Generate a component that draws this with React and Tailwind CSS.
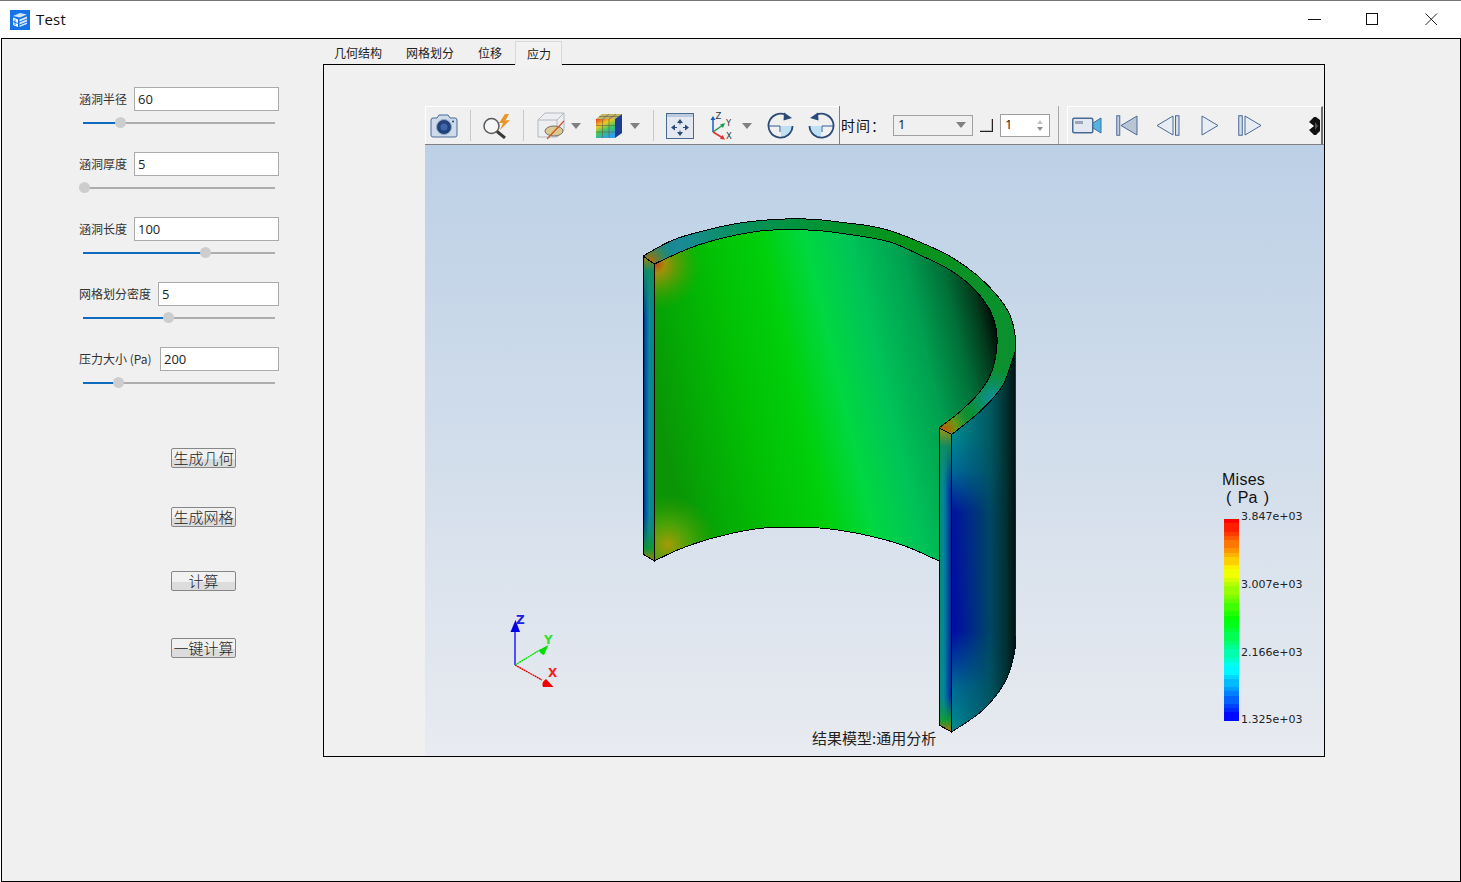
import React from 'react';

const cjk = "[font-family:'Noto_Sans_CJK_SC',sans-serif]";

const sliders = [
  { label: '涵洞半径', value: '60', inputClass: 'w-[145px]', handle: 37 },
  { label: '涵洞厚度', value: '5', inputClass: 'w-[145px]', handle: 1 },
  { label: '涵洞长度', value: '100', inputClass: 'w-[145px]', handle: 122 },
  { label: '网格划分密度', value: '5', inputClass: 'w-[121px]', handle: 85 },
  { label: '压力大小 (Pa)', value: '200', inputClass: 'w-[119px]', handle: 35 },
];

const actions = [
  { label: '生成几何', margin: 'mt-[60px]' },
  { label: '生成网格', margin: 'mt-[39px]' },
  { label: '计算', margin: 'mt-[44px]' },
  { label: '一键计算', margin: 'mt-[47px]' },
];

// smooth curve through points, pen must already be at the first point
const curve = (pts) => {
  let d = '';
  for (let i = 0; i < pts.length - 1; i++) {
    const p0 = pts[i - 1] || pts[i];
    const p1 = pts[i];
    const p2 = pts[i + 1];
    const p3 = pts[i + 2] || p2;
    const c1 = [p1[0] + (p2[0] - p0[0]) / 6, p1[1] + (p2[1] - p0[1]) / 6];
    const c2 = [p2[0] - (p3[0] - p1[0]) / 6, p2[1] - (p3[1] - p1[1]) / 6];
    d += ` C${c1[0]} ${c1[1]} ${c2[0]} ${c2[1]} ${p2[0]} ${p2[1]}`;
  }
  return d;
};

const outerArc = [[643, 256], [673, 240], [706.7, 230], [740, 223], [778, 219.3], [813, 219.3], [846.7, 223], [870, 226], [893, 231.7], [926.7, 245], [953, 258], [976.7, 275], [996.7, 295], [1010, 315], [1015, 335], [1015.7, 350]];
const outerLower = [[1015.7, 350], [1013, 358], [1003, 385], [986.7, 405], [970, 420], [951.6, 434.5]];
const innerArc = [[654.3, 264], [690, 248], [723, 238], [760, 231], [790, 229.7], [820, 230.7], [853, 235], [870, 237.7], [893, 243], [920, 255], [946.7, 268], [970, 285], [988, 306.7], [996, 328], [996.7, 348], [991.7, 371.7], [980, 391.7], [960, 411.7], [939, 428]];
const bottomArc = [[939, 561], [905, 546], [870, 536], [830, 529], [793, 527], [755, 529], [713, 538], [680, 549], [654.3, 561]];
const outerBottom = [[951.6, 732], [983, 710], [1005, 682], [1014, 655], [1015.7, 636]];

const interiorPath = `M654.3 264${curve(innerArc)} L939 561${curve(bottomArc)} Z`;
const rimPath = `M643 256${curve(outerArc)}${curve(outerLower)} L939 428${curve([...innerArc].reverse())} Z`;
const outsidePath = `M951.6 434.5 L951.6 732${curve(outerBottom)} L1015.7 350${curve(outerLower)} Z`;

const legendBands = Array.from({ length: 48 }, (_, i) => {
  const hue = (240 * i) / 47;
  return { key: i, color: `hsl(${Math.round(hue / 7) * 7} 100% 50%)` };
});

const Caret = ({ className = '' }) => (
  <svg width="10" height="6" viewBox="0 0 10 6" className={`shrink-0 ${className}`}>
    <path d="M0 0H10L5 6Z" fill="#808080" />
  </svg>
);

const Separator = ({ className = '' }) => <div className={`w-px h-[31px] bg-[#c9c9c9] shrink-0 ${className}`} />;

const CameraIcon = ({ className }) => (
  <svg width="28" height="24" viewBox="0 0 28 24" className={`shrink-0 ${className}`}>
    <path d="M3 4H7L9 1H18L20 4H25Q27 4 27 6V21Q27 23 25 23H3Q1 23 1 21V6Q1 4 3 4Z" fill="#cfdbea" stroke="#4a6a96" />
    <circle cx="14" cy="13" r="7.5" fill="#23427a" stroke="#8ea8cc" />
    <circle cx="14" cy="13" r="3.5" fill="#3f66a8" />
    <circle cx="23" cy="7.5" r="1" fill="#23427a" />
  </svg>
);

const SearchIcon = ({ className }) => (
  <svg width="30" height="26" viewBox="0 0 30 26" className={`shrink-0 ${className}`}>
    <circle cx="9.5" cy="13" r="7.5" fill="#f4f6f8" stroke="#5a5a5a" strokeWidth="1.5" />
    <path d="M15 18.5L23 25" stroke="#3a3a3a" strokeWidth="3" />
    <path d="M23 1L17 10L21 10L18 17L28 7L23.5 7.5L27 1Z" fill="#e8962a" />
  </svg>
);

const CubeIcon = ({ className }) => (
  <svg width="28" height="28" viewBox="0 0 28 28" className={`shrink-0 ${className}`}>
    <path d="M1 8L8 1H27V18L20 25H1Z" fill="#eceef2" stroke="#b4b8bf" />
    <path d="M1 8H20V25M20 8L27 1" fill="none" stroke="#b4b8bf" />
    <ellipse cx="17" cy="19" rx="9" ry="5" fill="#dbc98d" stroke="#707070" />
    <path d="M10 27L27 9" stroke="#d0502a" strokeWidth="1.2" />
  </svg>
);

const ColorCubeIcon = ({ className }) => (
  <svg width="28" height="26" viewBox="0 0 28 26" className={`shrink-0 ${className}`}>
    <defs>
      <linearGradient id="cubeFace" x1="0" y1="0" x2="0.5" y2="1">
        <stop offset="0" stopColor="#e83a28" />
        <stop offset="0.35" stopColor="#f0c820" />
        <stop offset="0.65" stopColor="#40c860" />
        <stop offset="1" stopColor="#30a0e8" />
      </linearGradient>
    </defs>
    <path d="M1 6L7 1H27L20 6Z" fill="#c4b468" />
    <path d="M20 6L27 1V20L20 25Z" fill="#1d3d94" />
    <rect x="1" y="6" width="19" height="19" fill="url(#cubeFace)" />
    <path d="M7.5 6V25M14 6V25M1 12.5H20M1 19H20M14 1L8 6M21 1L14 6M4 3.5H24" stroke="#5f5f4a" strokeWidth="0.6" />
  </svg>
);

const FitIcon = ({ className }) => (
  <svg width="28" height="26" viewBox="0 0 28 26" className={`shrink-0 ${className}`}>
    <rect x="0.5" y="0.5" width="27" height="25" fill="#e4e9f1" stroke="#4a6a96" />
    <rect x="1" y="1" width="26" height="3" fill="#bccbde" />
    <path d="M14 8V21M7.5 14.5H20.5" stroke="#2c4a74" />
    <path d="M14 6L11 10H17ZM14 23L11 19H17ZM5 14.5L9 11.5V17.5ZM23 14.5L19 11.5V17.5Z" fill="#2c4a74" />
    <rect x="11" y="11.5" width="6" height="6" fill="#e4e9f1" />
  </svg>
);

const TriadIcon = ({ className }) => (
  <svg width="24" height="28" viewBox="0 0 24 28" className={`shrink-0 ${className}`}>
    <path d="M3 20V7" stroke="#1a5fc0" strokeWidth="1.5" />
    <path d="M3 4L0.5 8H5.5Z" fill="#1a5fc0" />
    <path d="M3 20L13 13" stroke="#1a9a50" strokeWidth="1.5" />
    <path d="M15 11L10 12.5L13 16Z" fill="#1a9a50" />
    <path d="M3 20L13 26" stroke="#e03030" strokeWidth="1.5" />
    <path d="M15 27.5L10 27L12.5 23Z" fill="#e03030" />
    <text x="5.5" y="7" fontSize="8.5" fill="#333" fontFamily="'DejaVu Sans', sans-serif">Z</text>
    <text x="16" y="14" fontSize="8.5" fill="#333" fontFamily="'DejaVu Sans', sans-serif">Y</text>
    <text x="16" y="27" fontSize="8.5" fill="#333" fontFamily="'DejaVu Sans', sans-serif">X</text>
  </svg>
);

const RotateIcon = ({ className = '' }) => (
  <svg width="27" height="27" viewBox="0 0 27 27" className={`shrink-0 ${className}`}>
    <path d="M14 14H25A12 12 0 0 1 14 26Z" fill="#bfe0f4" />
    <path d="M1 14H13V20" fill="none" stroke="#2f5f96" />
    <path d="M19 3A12 12 0 1 0 25.5 14" fill="none" stroke="#2a4a78" strokeWidth="1.8" />
    <path d="M25 6L17 0.5L16.5 8.5Z" fill="#2a4a78" />
  </svg>
);

const VideoIcon = ({ className }) => (
  <svg width="30" height="17" viewBox="0 0 30 17" className={`shrink-0 ${className}`}>
    <rect x="0.75" y="1.25" width="20" height="14.5" rx="1.5" fill="#e4e9f1" stroke="#4a6a96" strokeWidth="1.5" />
    <rect x="3" y="4" width="8" height="3" fill="#9aa6b6" />
    <path d="M21 6L29 1V16L21 11Z" fill="#55b4dc" stroke="#3f6ea0" />
  </svg>
);

const FirstIcon = ({ className }) => (
  <svg width="22" height="21" viewBox="0 0 22 21" className={`shrink-0 ${className}`}>
    <rect x="0.75" y="0.75" width="3" height="19.5" fill="#c3cfe0" stroke="#4a6a96" />
    <path d="M21 1V20L5 10.5Z" fill="#b9c4d4" stroke="#4a6a96" />
  </svg>
);

const PrevIcon = ({ className }) => (
  <svg width="24" height="21" viewBox="0 0 24 21" className={`shrink-0 ${className}`}>
    <path d="M17 1V20L1 10.5Z" fill="#e8edf4" stroke="#4a6a96" />
    <rect x="19.5" y="0.75" width="3.5" height="19.5" fill="#d6deea" stroke="#4a6a96" />
  </svg>
);

const PlayIcon = ({ className }) => (
  <svg width="18" height="21" viewBox="0 0 18 21" className={`shrink-0 ${className}`}>
    <path d="M1 1V20L17 10.5Z" fill="#e8edf4" stroke="#4a6a96" />
  </svg>
);

const NextIcon = ({ className }) => (
  <svg width="24" height="21" viewBox="0 0 24 21" className={`shrink-0 ${className}`}>
    <rect x="0.75" y="0.75" width="3.5" height="19.5" fill="#d6deea" stroke="#4a6a96" />
    <path d="M7 1V20L23 10.5Z" fill="#e8edf4" stroke="#4a6a96" />
  </svg>
);

const MoreIcon = ({ className }) => (
  <svg width="11" height="18" viewBox="0 0 11 18" className={`shrink-0 ${className}`}>
    <rect width="11" height="18" fill="#111" />
    <path d="M0 0H5L0 5ZM11 0V3L7 0ZM0 18V13L5 18ZM11 18H7L11 14Z" fill="#eee" />
    <path d="M0 5L5 9L0 13Z" fill="#fff" />
    <path d="M6 5L9 9L6 13Z" fill="#555" />
  </svg>
);

const WindowControls = () => (
  <div className="flex items-center ml-auto">
    <svg width="13" height="13" viewBox="0 0 13 13" className="shrink-0">
      <path d="M0 6.5H13" stroke="#111" />
    </svg>
    <svg width="13" height="13" viewBox="0 0 13 13" className="shrink-0 ml-[45px]">
      <rect x="0.5" y="0.5" width="11" height="11" fill="none" stroke="#111" />
    </svg>
    <svg width="13" height="13" viewBox="0 0 13 13" className="shrink-0 ml-[46px] mr-[23px]">
      <path d="M0.5 0.5L12 12M12 0.5L0.5 12" stroke="#222" />
    </svg>
  </div>
);

const Logo = () => (
  <svg width="20" height="20" viewBox="0 0 20 20" className="shrink-0">
    <rect width="20" height="20" fill="#1473e6" />
    <path d="M3 6L10 3L17 4.5L10 7.5Z" fill="#cfe3fb" />
    <path d="M3 7.5L8 9.5V17L3 15Z" fill="#fff" />
    <path d="M9.5 9.5L17 6.5V8.5L9.5 11.5ZM9.5 12.5L17 9.5V11.5L9.5 14.5ZM9.5 15.5L17 12.5V14L9.5 17Z" fill="#dcebfd" />
    <path d="M5 9.5V15M3 11.5L8 13.5" stroke="#1473e6" />
  </svg>
);

const SliderRow = ({ label, value, inputClass, handle }) => (
  <div className="flex flex-col w-[200px]">
    <div className="flex items-center h-[24px]">
      <span className={`text-[12px] leading-none text-[#333] whitespace-nowrap ${cjk}`}>{label}</span>
      <input
        readOnly
        value={value}
        className={`ml-auto h-[24px] ${inputClass} bg-white border border-[#ababab] pl-[3px] text-[13px] text-[#222] outline-none [font-family:'Open_Sans',sans-serif]`}
      />
    </div>
    <div className="relative h-[11px] mt-[6px] ml-[4px] w-[192px] flex items-center">
      <div className="w-full h-[2px] bg-[#adadad]" />
      <div className="absolute left-0 h-[2px] bg-[#0f6cbd]" style={{ width: handle }} />
      <div className="absolute top-0 w-[11px] h-[11px] rounded-full bg-[#cdcdcd]" style={{ left: handle - 5 }} />
    </div>
  </div>
);

const LeftPanel = () => (
  <div className="w-[321px] shrink-0 pt-[48px] flex flex-col">
    <div className="flex flex-col gap-[24px] ml-[77px]">
      {sliders.map((s) => <SliderRow key={s.label} {...s} />)}
    </div>
    <div className="flex flex-col items-start ml-[169px]">
      {actions.map((a) => (
        <button
          key={a.label}
          className={`${a.margin} w-[65px] h-[20px] flex items-center justify-center pb-px rounded-[2px] border border-[#868686] bg-[linear-gradient(#f1f1f1_0%,#f1f1f1_55%,#dcdcdc_55%,#dcdcdc_100%)] text-[15px] font-light leading-none text-[#222] whitespace-nowrap ${cjk}`}
        >
          {a.label}
        </button>
      ))}
    </div>
  </div>
);

const Tabs = () => (
  <div className={`flex items-end h-[25px] text-[12px] text-[#222] ${cjk}`}>
    <div className="w-[72px] pl-[11px] h-[23px] flex items-center">几何结构</div>
    <div className="w-[71px] pl-[11px] h-[23px] flex items-center">网格划分</div>
    <div className="w-[49px] pl-[12px] h-[23px] flex items-center">位移</div>
    <div className="relative z-10 -mb-px w-[47px] pl-[11px] h-[24px] flex items-center bg-[#f2f2f2] border border-b-0 border-[#d9d9d9]">应力</div>
  </div>
);

const Toolbar = () => (
  <div className="flex h-[39px] border-b border-[#808080] bg-[#f0f0f0]">
    <div className="flex items-center shrink-0 w-[414px] border-t border-l border-white">
      <CameraIcon className="ml-[4px]" />
      <Separator className="ml-[12px]" />
      <SearchIcon className="ml-[11px]" />
      <Separator className="ml-[11px]" />
      <CubeIcon className="ml-[13px]" />
      <Caret className="ml-[6px]" />
      <ColorCubeIcon className="ml-[14px]" />
      <Caret className="ml-[7px]" />
      <Separator className="ml-[13px]" />
      <FitIcon className="ml-[12px]" />
      <TriadIcon className="ml-[16px]" />
      <Caret className="ml-[8px]" />
      <RotateIcon className="ml-[15px]" />
      <RotateIcon className="ml-[14px] -scale-x-100" />
    </div>
    <div className="flex items-center shrink-0 w-[221px] border-l border-[#808080] pl-px">
      <span className={`w-[52px] text-[14px] tracking-[1px] text-[#111] whitespace-nowrap ${cjk}`}>时间：</span>
      <div className="w-[80px] h-[21px] border border-[#a0a0a0] bg-[#f0f0f0] flex items-center pl-[4px] pr-[6px] text-[13px] text-[#111] [font-family:'Open_Sans',sans-serif]">
        1
        <Caret className="ml-auto" />
      </div>
      <div className="ml-[7px] w-[13px] h-[13px] border-r border-b border-[#222] shadow-[inset_-1px_-1px_0_#bbb]" />
      <div className="ml-[7px] w-[50px] h-[23px] border border-[#a0a0a0] bg-white flex items-center pl-[4px] text-[13px] text-[#111] [font-family:'Open_Sans',sans-serif]">
        1
        <svg width="8" height="13" viewBox="0 0 8 13" className="ml-auto mr-[5px]">
          <path d="M4 1L7 5H1Z" fill="#c4c4c4" />
          <path d="M4 12L7 8H1Z" fill="#909090" />
        </svg>
      </div>
      <div className="ml-[8px] h-full w-px bg-[#a8a8a8]" />
    </div>
    <div className="flex items-center shrink-0 ml-[7px] w-[256px] border-t border-l border-white border-r-2 border-r-[#6e6e6e]">
      <VideoIcon className="ml-[4px]" />
      <FirstIcon className="ml-[14px]" />
      <PrevIcon className="ml-[18px]" />
      <PlayIcon className="ml-[21px]" />
      <NextIcon className="ml-[19px]" />
      <MoreIcon className="ml-auto mr-px" />
    </div>
  </div>
);

const Model = () => (
  <svg viewBox="425 145 899 611" className="absolute inset-0 w-full h-full">
    <defs>
      <linearGradient id="inner" gradientUnits="userSpaceOnUse" x1="654" y1="400" x2="998" y2="320">
        <stop offset="0" stopColor="#0a9406" />
        <stop offset="0.1" stopColor="#05a805" />
        <stop offset="0.25" stopColor="#02c004" />
        <stop offset="0.4" stopColor="#00d00c" />
        <stop offset="0.52" stopColor="#00d840" />
        <stop offset="0.64" stopColor="#00c458" />
        <stop offset="0.78" stopColor="#00a050" />
        <stop offset="0.88" stopColor="#007038" />
        <stop offset="0.95" stopColor="#023a1c" />
        <stop offset="1" stopColor="#000" />
      </linearGradient>
      <radialGradient id="hotTop" gradientUnits="userSpaceOnUse" cx="656" cy="264" r="46">
        <stop offset="0" stopColor="#c04a10" />
        <stop offset="0.2" stopColor="#a89008" stopOpacity="0.95" />
        <stop offset="1" stopColor="#40a000" stopOpacity="0" />
      </radialGradient>
      <radialGradient id="hotBottom" gradientUnits="userSpaceOnUse" cx="668" cy="545" r="50">
        <stop offset="0" stopColor="#a89a08" />
        <stop offset="0.45" stopColor="#60a808" stopOpacity="0.7" />
        <stop offset="1" stopColor="#40a000" stopOpacity="0" />
      </radialGradient>
      <linearGradient id="rim" gradientUnits="userSpaceOnUse" x1="643" y1="0" x2="1016" y2="0">
        <stop offset="0" stopColor="#10807a" />
        <stop offset="0.1" stopColor="#1a8a98" />
        <stop offset="0.22" stopColor="#0a9068" />
        <stop offset="0.4" stopColor="#009440" />
        <stop offset="0.7" stopColor="#069418" />
        <stop offset="1" stopColor="#0c9030" />
      </linearGradient>
      <radialGradient id="rimLeft" gradientUnits="userSpaceOnUse" cx="651" cy="260" r="22">
        <stop offset="0" stopColor="#b06a08" />
        <stop offset="1" stopColor="#30a040" stopOpacity="0" />
      </radialGradient>
      <radialGradient id="rimRight" gradientUnits="userSpaceOnUse" cx="945" cy="429" r="30">
        <stop offset="0" stopColor="#c05a08" />
        <stop offset="0.4" stopColor="#709a10" stopOpacity="0.9" />
        <stop offset="1" stopColor="#108a70" stopOpacity="0" />
      </radialGradient>
      <radialGradient id="rimTeal" gradientUnits="userSpaceOnUse" cx="992" cy="398" r="30">
        <stop offset="0" stopColor="#1090a0" stopOpacity="0.95" />
        <stop offset="1" stopColor="#0a8a80" stopOpacity="0" />
      </radialGradient>
      <linearGradient id="outHue" gradientUnits="userSpaceOnUse" x1="0" y1="435" x2="0" y2="732">
        <stop offset="0" stopColor="#008c90" />
        <stop offset="0.12" stopColor="#006a9c" />
        <stop offset="0.26" stopColor="#0010a0" />
        <stop offset="0.66" stopColor="#0008a8" />
        <stop offset="0.85" stopColor="#006a98" />
        <stop offset="1" stopColor="#009090" />
      </linearGradient>
      <linearGradient id="outShade" gradientUnits="userSpaceOnUse" x1="951" y1="0" x2="1016" y2="0">
        <stop offset="0" stopColor="#005060" stopOpacity="0" />
        <stop offset="0.35" stopColor="#005060" stopOpacity="0.5" />
        <stop offset="0.6" stopColor="#005058" stopOpacity="0.85" />
        <stop offset="0.85" stopColor="#003030" stopOpacity="1" />
        <stop offset="1" stopColor="#001010" stopOpacity="1" />
      </linearGradient>
      <linearGradient id="cutHue" gradientUnits="userSpaceOnUse" x1="939" y1="0" x2="951" y2="0">
        <stop offset="0" stopColor="#0a8a70" />
        <stop offset="0.4" stopColor="#0088a0" />
        <stop offset="1" stopColor="#002a98" />
      </linearGradient>
      <linearGradient id="cutLeft" gradientUnits="userSpaceOnUse" x1="643" y1="0" x2="654" y2="0">
        <stop offset="0" stopColor="#002a90" />
        <stop offset="0.55" stopColor="#0a88a0" />
        <stop offset="1" stopColor="#0a8878" />
      </linearGradient>
      <linearGradient id="cutLeftEnds" gradientUnits="userSpaceOnUse" x1="0" y1="256" x2="0" y2="561">
        <stop offset="0" stopColor="#a88008" />
        <stop offset="0.05" stopColor="#109060" stopOpacity="0.9" />
        <stop offset="0.2" stopColor="#109060" stopOpacity="0" />
        <stop offset="0.85" stopColor="#109060" stopOpacity="0" />
        <stop offset="0.96" stopColor="#109a30" stopOpacity="0.9" />
        <stop offset="1" stopColor="#a88008" />
      </linearGradient>
      <linearGradient id="cutRightEnds" gradientUnits="userSpaceOnUse" x1="0" y1="428" x2="0" y2="732">
        <stop offset="0" stopColor="#a89008" />
        <stop offset="0.06" stopColor="#10905a" stopOpacity="0.9" />
        <stop offset="0.2" stopColor="#109060" stopOpacity="0" />
        <stop offset="0.88" stopColor="#109060" stopOpacity="0" />
        <stop offset="0.96" stopColor="#10a030" stopOpacity="0.9" />
        <stop offset="1" stopColor="#c07008" />
      </linearGradient>
    </defs>

    <path d={interiorPath} fill="url(#inner)" />
    <path d={interiorPath} fill="url(#hotTop)" />
    <path d={interiorPath} fill="url(#hotBottom)" />
    <path d={`M654.3 561${curve([...bottomArc].reverse())}`} fill="none" stroke="#000" shapeRendering="crispEdges" />

    <path d={outsidePath} fill="url(#outHue)" />
    <path d={outsidePath} fill="url(#outShade)" />
    <path d={`M951.6 732${curve(outerBottom)}`} fill="none" stroke="#012" shapeRendering="crispEdges" />

    <path d="M643 256L654.3 264V561L643 554Z" fill="url(#cutLeft)" />
    <path d="M643 256L654.3 264V561L643 554Z" fill="url(#cutLeftEnds)" />
    <path d="M643 256L654.3 264V561L643 554Z" fill="none" stroke="#000" shapeRendering="crispEdges" />

    <path d="M939 428L951.6 434.5V732L939 725Z" fill="url(#cutHue)" />
    <path d="M939 428L951.6 434.5V732L939 725Z" fill="url(#cutRightEnds)" />
    <path d="M939 428L951.6 434.5V732L939 725Z" fill="none" stroke="#000" shapeRendering="crispEdges" />

    <path d={rimPath} fill="url(#rim)" />
    <path d={rimPath} fill="url(#rimTeal)" />
    <path d={rimPath} fill="url(#rimLeft)" />
    <path d={rimPath} fill="url(#rimRight)" />
    <path d={rimPath} fill="none" stroke="#000" shapeRendering="crispEdges" />

    {/* axis triad */}
    <path d="M515 665V628" stroke="#0000ff" strokeWidth="1.3" />
    <path d="M515.5 620L520 632H510.5Z" fill="#0000e8" />
    <path d="M515 665L540 650" stroke="#00e000" strokeWidth="1.3" strokeDasharray="2 0.5" />
    <path d="M548.5 645L544 655Q540 654 539 650Z" fill="#00e000" />
    <path d="M515 665L542 680" stroke="#e80000" strokeWidth="1.3" strokeDasharray="2 0.5" />
    <path d="M553.5 687H543Q541 682 546 679Z" fill="#f00000" />
    <g fontFamily="'DejaVu Sans', sans-serif" fontWeight="700" fontSize="12">
      <text x="516" y="624" fill="#2020e0">Z</text>
      <text x="544" y="644" fill="#30e030">Y</text>
      <text x="548" y="677" fill="#f02020">X</text>
    </g>
  </svg>
);

const Legend = () => (
  <>
    <div className="absolute left-[797px] top-[326px] text-[16px] leading-[18px] tracking-[0.25px] text-[#111] [font-family:'Liberation_Sans',sans-serif]">Mises</div>
    <div className="absolute left-[801px] top-[344px] text-[16px] leading-[18px] [word-spacing:2px] text-[#111] [font-family:'Liberation_Sans',sans-serif]">( Pa )</div>
    <div className="absolute left-[799px] top-[374px] w-[15px] h-[202px] flex flex-col">
      {legendBands.map((b) => (
        <div key={b.key} className="flex-1" style={{ backgroundColor: b.color }} />
      ))}
    </div>
    <div className="absolute left-[816px] top-[365px] text-[11px] leading-[14px] text-[#222] [font-family:'DejaVu_Sans',sans-serif]">3.847e+03</div>
    <div className="absolute left-[816px] top-[433px] text-[11px] leading-[14px] text-[#222] [font-family:'DejaVu_Sans',sans-serif]">3.007e+03</div>
    <div className="absolute left-[816px] top-[501px] text-[11px] leading-[14px] text-[#222] [font-family:'DejaVu_Sans',sans-serif]">2.166e+03</div>
    <div className="absolute left-[816px] top-[568px] text-[11px] leading-[14px] text-[#222] [font-family:'DejaVu_Sans',sans-serif]">1.325e+03</div>
  </>
);

const Viewer = () => (
  <div className="flex-1 ml-[101px] mt-[41px] flex flex-col min-h-0">
    <Toolbar />
    <div className="relative flex-1 bg-linear-to-b from-[#bcd0e6] to-[#e8ebf0]">
      <Model />
      <Legend />
      <div className={`absolute left-[387px] top-[583px] text-[15px] leading-[20px] text-[#222] whitespace-nowrap ${cjk}`}>结果模型:通用分析</div>
    </div>
  </div>
);

export default function App() {
  return (
    <div className="w-[1461px] h-[882px] bg-white flex flex-col border-t border-[#777] overflow-hidden">
      <div className="h-[37px] flex items-center pl-[10px] shrink-0">
        <Logo />
        <span className="ml-[6px] text-[15px] tracking-[0.2px] text-[#111] [font-family:'Open_Sans',sans-serif]">Test</span>
        <WindowControls />
      </div>
      <div className="flex-1 ml-px flex border border-black bg-[#f0f0f0] min-h-0">
        <LeftPanel />
        <div className="flex flex-col">
          <Tabs />
          <div className="w-[1002px] h-[693px] border border-black flex flex-col">
            <Viewer />
          </div>
        </div>
      </div>
    </div>
  );
}
